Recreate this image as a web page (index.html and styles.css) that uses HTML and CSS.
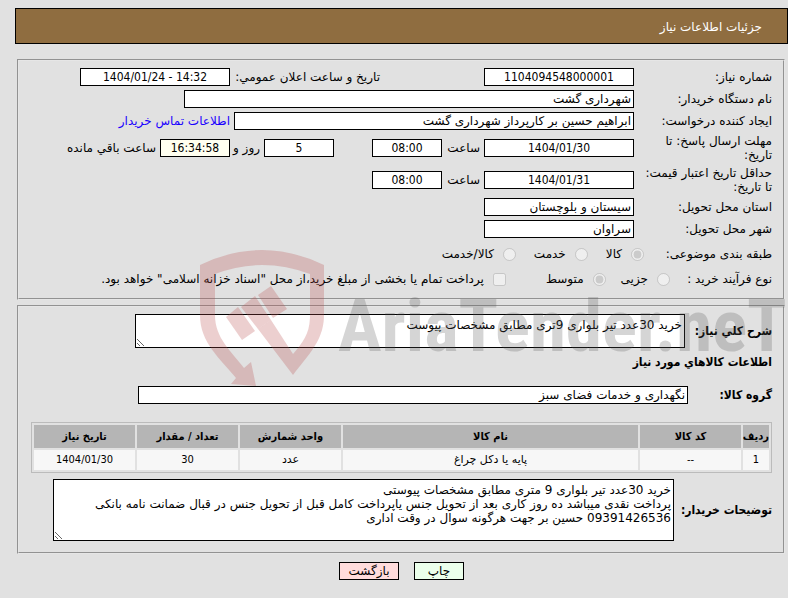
FILE: index.html
```
<!DOCTYPE html>
<html lang="fa" dir="rtl">
<head>
  <meta charset="UTF-8">
  <title>جزئیات اطلاعات نیاز</title>
  <link rel="stylesheet" href="styles.css">
</head>
<body>

<h1 class="title">جزئیات اطلاعات نیاز</h1>

<form>
  <fieldset class="need">
    <div class="row">
      <label class="name" for="needNo">شماره نیاز:</label>
      <input class="box medium center" id="needNo" type="text" value="1104094548000001" readonly>
      <label class="announce" for="announceDate">تاریخ و ساعت اعلان عمومي:</label>
      <input class="box medium center" id="announceDate" type="text" dir="ltr" value="1404/01/24 - 14:32" readonly>
    </div>
    <div class="row">
      <label class="name" for="buyer">نام دستگاه خریدار:</label>
      <input class="box wide" id="buyer" type="text" value="شهرداری گشت" readonly>
    </div>
    <div class="row">
      <label class="name" for="creator">ایجاد کننده درخواست:</label>
      <input class="box large" id="creator" type="text" value="ابراهیم حسین بر کارپرداز شهرداری گشت" readonly>
      <a href="#">اطلاعات تماس خریدار</a>
    </div>
    <div class="row">
      <label class="name" for="replyDate">مهلت ارسال پاسخ: تا<br>تاریخ:</label>
      <input class="box medium center" id="replyDate" type="text" value="1404/01/30" readonly>
      <label class="unit" for="replyTime">ساعت</label>
      <input class="box small center" id="replyTime" type="text" value="08:00" readonly>
      <input class="box small center days" id="days" type="text" value="5" readonly>
      <label class="and" for="days">روز و</label>
      <input class="box small center timer" id="remain" type="text" value="16:34:58" readonly>
      <label for="remain">ساعت باقي مانده</label>
    </div>
    <div class="row">
      <label class="name" for="validDate">حداقل تاریخ اعتبار قیمت:<br>تا تاریخ:</label>
      <input class="box medium center" id="validDate" type="text" value="1404/01/31" readonly>
      <label class="unit" for="validTime">ساعت</label>
      <input class="box small center" id="validTime" type="text" value="08:00" readonly>
    </div>
    <div class="row">
      <label class="name" for="province">استان محل تحویل:</label>
      <input class="box medium" id="province" type="text" value="سیستان و بلوچستان" readonly>
    </div>
    <div class="row">
      <label class="name" for="city">شهر محل تحویل:</label>
      <input class="box medium" id="city" type="text" value="سراوان" readonly>
    </div>
    <div class="row choices subject">
      <span class="caption">طبقه بندی موضوعی:</span>
      <label><input type="radio" name="subject" checked disabled>کالا</label>
      <label><input type="radio" name="subject" disabled>خدمت</label>
      <label><input type="radio" name="subject" disabled>کالا/خدمت</label>
    </div>
    <div class="row choices process">
      <span class="caption">نوع فرآیند خرید :</span>
      <label><input type="radio" name="process" disabled>جزیی</label>
      <label><input type="radio" name="process" checked disabled>متوسط</label>
      <label class="treasury"><input type="checkbox" disabled>پرداخت تمام یا بخشی از مبلغ خرید،از محل "اسناد خزانه اسلامی" خواهد بود.</label>
    </div>
  </fieldset>

  <fieldset class="goods">
    <div class="row">
      <label class="strong for-summary" for="summary">شرح کلي نیاز:</label>
      <textarea class="box summary" id="summary" readonly>خرید 30عدد تیر بلواری 9تری مطابق مشخصات پیوست</textarea>
    </div>
    <h2>اطلاعات کالاهاي مورد نیاز</h2>
    <div class="row">
      <label class="strong for-group" for="group">گروه کالا:</label>
      <input class="box long" id="group" type="text" value="نگهداری و خدمات فضای سبز" readonly>
    </div>
    <table>
      <thead>
        <tr>
          <th class="c-row">ردیف</th>
          <th class="c-code">کد کالا</th>
          <th>نام کالا</th>
          <th class="c-code">واحد شمارش</th>
          <th class="c-code">تعداد / مقدار</th>
          <th class="c-code">تاریخ نیاز</th>
        </tr>
      </thead>
      <tbody>
        <tr>
          <td>1</td>
          <td>--</td>
          <td class="item">پایه یا دکل چراغ</td>
          <td class="item">عدد</td>
          <td>30</td>
          <td>1404/01/30</td>
        </tr>
      </tbody>
    </table>
    <div class="row">
      <label class="strong for-notes" for="notes">توضیحات خریدار:</label>
      <textarea class="box notes" id="notes" readonly>خرید 30عدد تیر بلواری 9 متری مطابق مشخصات پیوستی
پرداخت نقدی میباشد ده روز کاری بعد از تحویل جنس یاپرداخت کامل قبل از تحویل جنس در قبال ضمانت نامه بانکی
09391426536 حسین بر جهت هرگونه سوال در وقت اداری</textarea>
    </div>
  </fieldset>

  <div class="buttons">
    <button class="print" type="button">چاپ</button>
    <button class="back" type="button">بازگشت</button>
  </div>
</form>

<!-- watermark over both boxes -->
<svg class="watermark" viewBox="200 245 588 145" direction="ltr">
  <g class="shield">
    <path d="M200 265 Q262 235 324 265 V315 C324 340 309 354 293 375 L258 329 L271 320 L293 354 C303 342 310 334 310 315 V274 Q262 256 215 274 V315 C215 338 231 351 244 368 L251 362 L256 386 L231 384 L236 378 C220 358 200 343 200 315 Z"/>
    <path d="M271 286 L287 309 L273 318 L258 295 Z"/>
    <path d="M255 296 L271 320 L258 329 L241 307 Z"/>
    <path d="M238 307 L255 331 L242 340 L226 317 Z"/>
  </g>
  <text x="338" y="351">AriaTender.neT</text>
</svg>

</body>
</html>
```
FILE: styles.css
```
* {
  box-sizing: border-box;
}

body {
  margin: 0;
  padding-top: 8px;
  background-color: #e1e1e1;
  color: #000;
  font-family: "DejaVu Sans", sans-serif;
  font-size: 12px;
  line-height: 14px;
  position: relative;
}

.title {
  margin: 0 0 15px 15px;
  height: 36px;
  padding: 0 25px;
  border: 1px solid #000;
  background-color: #8f6d40;
  color: #fff;
  font-size: 12px;
  font-weight: normal;
  line-height: 36px;
}

fieldset {
  margin: 0 3px 5px 17px;
  border: 2px groove #e6e6e6;
  min-width: 0;
}

.row {
  display: flex;
  align-items: center;
  gap: 4px;
  white-space: nowrap;
}

.need {
  display: flex;
  flex-direction: column;
  gap: 4px;
  padding: 7px 11px 10px;
}

.name {
  width: 134px;
}

.box {
  height: 18px;
  margin: 0;
  padding: 0 2px;
  border: 1px solid #000;
  background-color: #fff;
  color: #000;
  font: inherit;
}

.small {
  width: 70px;
}

.medium {
  width: 150px;
}

.large {
  width: 400px;
}

.wide {
  width: 450px;
}

.long {
  width: 550px;
}

.center {
  font-family: "DejaVu Sans Condensed", "DejaVu Sans", sans-serif;
  text-align: center;
}

.announce {
  width: 146px;
  margin-right: 100px;
}

.unit {
  width: 34px;
}

.days {
  margin-right: 34px;
}

.and {
  width: 26px;
}

.timer {
  background-color: #fffff0;
}

a {
  color: #1a00ff;
  text-decoration: none;
}

.choices label {
  display: flex;
  align-items: center;
  gap: 9px;
}

.choices input {
  width: 13px;
  height: 13px;
  margin: 0;
}

.subject {
  height: 24px;
  gap: 18px;
}

.subject .caption {
  width: 110px;
}

.process {
  height: 18px;
  gap: 15px;
}

.process .caption {
  width: 87px;
}

.process .treasury {
  margin-right: 25px;
}

.goods {
  padding: 7px 11px 11px 12px;
}

.strong,
h2 {
  font-family: "DejaVu Sans Condensed", "DejaVu Sans", sans-serif;
  font-weight: bold;
}

.for-summary {
  width: 83px;
}

.for-group {
  width: 80px;
}

.for-notes {
  width: 94px;
}

.goods textarea {
  padding: 3px 2px;
}

.summary {
  width: 550px;
  height: 34px;
}

.goods .notes {
  width: 621px;
  height: 62px;
}

h2 {
  margin: 7px 0 17px;
  font-size: 12px;
  line-height: 14px;
}

table {
  width: 100%;
  margin: 18px 0 6px;
  table-layout: fixed;
  border: 1px solid #bbb;
  border-spacing: 2px;
  font-family: "DejaVu Sans Condensed", "DejaVu Sans", sans-serif;
  font-size: 11px;
  text-align: center;
}

th {
  height: 23px;
  padding: 0;
  background-color: #b5b5b5;
}

td {
  height: 20px;
  padding: 0;
  background-color: #f7f7f7;
}

.item {
  font-family: "DejaVu Sans", sans-serif;
}

.c-row {
  width: 26px;
}

.c-code {
  width: 101px;
}

.buttons {
  display: flex;
  justify-content: center;
  gap: 15px;
  padding: 3px 0 18px 15px;
}

button {
  height: 18px;
  padding: 0;
  border: 1px solid #000;
  color: #000;
  font: inherit;
}

.print {
  width: 50px;
  background-color: #ebffeb;
}

.back {
  width: 60px;
  background-color: #ffdcdc;
}

.watermark {
  position: absolute;
  top: 245px;
  left: 200px;
  width: 588px;
  height: 145px;
  pointer-events: none;
}

.shield {
  fill: rgba(184, 77, 77, 0.27);
}

.watermark text {
  fill: rgba(88, 88, 88, 0.25);
  font-family: "Roboto Condensed", "Liberation Sans", sans-serif;
  font-size: 73px;
  font-weight: bold;
}
```
